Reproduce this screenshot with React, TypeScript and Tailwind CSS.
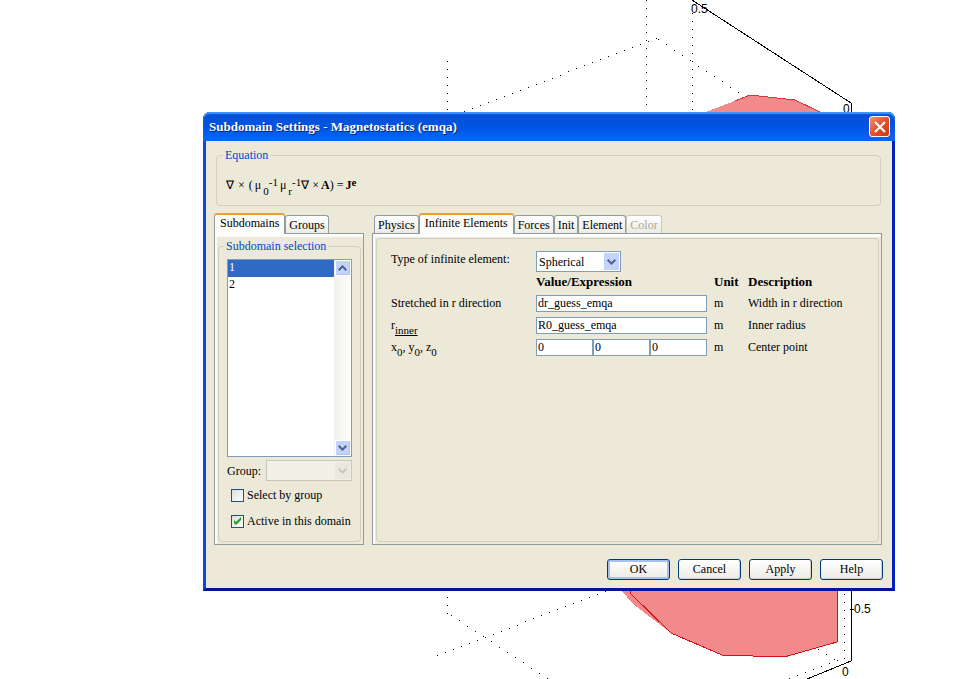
import React, { useState } from "react";
import clsx from "clsx";

type Point = [number, number];

interface TabsProps {
  items: { name: string; disabled?: boolean }[];
  active: string;
  onChange: (name: string) => void;
}

// 1px dots spaced 8px apart along the longer direction
const dots = ([x1, y1]: Point, [x2, y2]: Point): Point[] => {
  const steps = Math.floor(Math.max(Math.abs(x2 - x1), Math.abs(y2 - y1)) / 8);
  return Array.from({ length: steps + 1 }, (_, i) => [
    Math.round(x1 + ((x2 - x1) * i) / steps),
    Math.round(y1 + ((y2 - y1) * i) / steps),
  ]);
};

const gridDots: Point[] = [
  ...dots([447, 61], [447, 613]),
  ...dots([646, 0], [646, 112]),
  ...dots([692, 5], [692, 109]),
  ...dots([464, 111], [656, 38]),
  ...dots([658, 39], [738, 92]),
  ...dots([451, 615], [547, 678]),
  ...dots([437, 655], [605, 591]),
  ...dots([844, 594], [844, 658]),
  ...dots([789, 678], [837, 660]),
  ...dots([818, 649], [834, 659]),
];

const Plot: React.FC = () => (
  <svg
    className="absolute top-0 left-0 h-[679px] w-[973px]"
    viewBox="0 0 973 679"
    fontFamily="'Liberation Sans', Arial, sans-serif"
    fontSize="12"
    shapeRendering="crispEdges"
    aria-hidden="true"
  >
    <polygon points="706,112 750,95 795,100 820,112" fill="#f28a8c" />
    <polyline points="735,101 750,95 795,100 820,112" fill="none" stroke="#d8353c" />
    <polygon
      points="621,590 633,604 671,633 722,655 784,657 837,642 837,590"
      fill="#f28a8c"
    />
    <polyline
      points="630,590 631,594 671,633 722,655 784,657 837,642 837,590"
      fill="none"
      stroke="#d3121c"
    />
    {gridDots.map(([x, y], i) => (
      <rect key={i} x={x} y={y} width="1" height="1" fill="#000" />
    ))}
    <polyline points="692,0 851,103 851,661 807,679" fill="none" stroke="#000" />
    <path d="M850 609h4" stroke="#000" />
    <text x="691" y="13">0.5</text>
    <text x="843" y="113">0</text>
    <text x="854" y="613">0.5</text>
    <text x="842" y="676">0</text>
  </svg>
);

const Chevron: React.FC<{ up?: boolean }> = ({ up }) => (
  <svg viewBox="0 0 9 6" className="h-[6px] w-[9px]" fill="none" stroke="currentColor" strokeWidth="2">
    <path d={up ? "M0.7 5.2 4.5 1.4 8.3 5.2" : "M0.7 0.8 4.5 4.6 8.3 0.8"} />
  </svg>
);

const ScrollButton: React.FC<{ up?: boolean; onClick: () => void }> = ({ up, onClick }) => (
  <button
    type="button"
    aria-label={up ? "Scroll up" : "Scroll down"}
    onClick={onClick}
    className="flex h-4 w-4 items-center justify-center rounded-xs border border-white bg-[#c3d3fd] text-[#4d6185] shadow-[inset_-1px_-1px_0_#aec3f5]"
  >
    <Chevron up={up} />
  </button>
);

const Tabs: React.FC<TabsProps> = ({ items, active, onChange }) => (
  <div role="tablist" className="relative z-10 -mb-px flex h-[21px] items-end">
    {items.map(({ name, disabled }) => (
      <button
        key={name}
        type="button"
        role="tab"
        aria-selected={name === active}
        disabled={disabled}
        onClick={() => onChange(name)}
        className={clsx(
          "rounded-t-[3px] border border-b-0",
          name === active
            ? "h-[21px] border-x-[#919b9c] border-t-2 border-t-[#e9a033] bg-[#fcfcfa] px-[5px] pb-1"
            : "mb-px h-[18px] border-[#919b9c] bg-linear-to-b from-white to-[#ecebe5] px-[3px]",
          disabled && "border-[#c9c7ba] text-[#aca899]"
        )}
      >
        {name}
      </button>
    ))}
  </div>
);

const TextField: React.FC<{ id: string; label: string; initial: string }> = ({ id, label, initial }) => {
  const [value, setValue] = useState(initial);

  return (
    <input
      id={id}
      type="text"
      aria-label={label}
      value={value}
      onChange={(e) => setValue(e.target.value)}
      className="block h-[17px] w-full min-w-0 border border-[#7f9db9] bg-white pl-px outline-none"
    />
  );
};

const CheckBox: React.FC<{ label: string; initial?: boolean }> = ({ label, initial = false }) => {
  const [checked, setChecked] = useState(initial);

  return (
    <label className="flex h-4 items-center gap-[3px]">
      <span className="relative h-[13px] w-[13px]">
        <input
          type="checkbox"
          checked={checked}
          onChange={(e) => setChecked(e.target.checked)}
          className="block h-[13px] w-[13px] appearance-none border border-[#1c5180] bg-linear-to-br from-[#dcdcd7] to-white"
        />
        {checked && (
          <svg viewBox="0 0 13 13" className="pointer-events-none absolute inset-0" fill="#21a121">
            <path d="M3 5v3l2 2 5-5V2L5 7z" />
          </svg>
        )}
      </span>
      {label}
    </label>
  );
};

const DialogButton: React.FC<{ children: React.ReactNode; primary?: boolean }> = ({ children, primary }) => (
  <button
    type="button"
    className={clsx(
      "h-[21px] w-[63px] rounded-[3px] border border-[#003c74] bg-linear-to-b from-white to-[#ecebe5] pb-[2px]",
      primary ? "shadow-[inset_0_0_0_2px_#a3c0f0]" : "shadow-[inset_-1px_-1px_0_#d6d0c5]"
    )}
  >
    {children}
  </button>
);

const panelClass =
  "flex flex-1 flex-col border border-[#919b9c] bg-[#ece9d8] pr-[2px] pb-[2px] pl-[3px] pt-1 shadow-[inset_2px_3px_0_#fcfcfa]";

const subClass = "bottom-[-5px] text-[11px]";

const App: React.FC = () => {
  const [leftTab, setLeftTab] = useState("Subdomains");
  const [rightTab, setRightTab] = useState("Infinite Elements");
  const [subdomain, setSubdomain] = useState("1");
  const [elementType, setElementType] = useState("Spherical");

  return (
    <main className="relative min-h-screen overflow-hidden bg-white pt-28 pr-[78px] pl-[203px] font-['Liberation_Serif','Times_New_Roman',serif] text-[12px] leading-4 text-black">
      <Plot />

      <section
        role="dialog"
        aria-labelledby="dialog-title"
        className="relative rounded-t-[7px] border-x-[3px] border-b-[3px] border-r-[#0022c0] border-b-[#00159a] border-l-[#0a48e0] bg-[#ece9d8]"
      >
        <header className="-mx-[3px] flex h-[29px] items-center justify-between rounded-t-[7px] bg-linear-to-b from-[#0a4fd0] via-[#0054e3] to-[#0466fb] pr-[5px] pl-[6px] shadow-[inset_0_2px_1px_#3d95ff]">
          <h1 id="dialog-title" className="text-[13px] font-bold text-white [text-shadow:1px_1px_0_#0a246a]">
            Subdomain Settings - Magnetostatics (emqa)
          </h1>
          <button
            type="button"
            aria-label="Close"
            className="flex h-[21px] w-[21px] items-center justify-center rounded-[3px] border border-white bg-linear-to-br from-[#ee8f72] via-[#e0512b] to-[#c93a10]"
          >
            <svg viewBox="0 0 12 12" className="h-3 w-3" stroke="#fff" strokeWidth="2">
              <path d="M1 1l10 10M11 1L1 11" />
            </svg>
          </button>
        </header>

        <div className="pt-[6px] pr-[10px] pb-2 pl-2">
          <fieldset className="mr-px ml-[2px] h-[59px] rounded-[4px] border border-[#d0d0bf] pl-[9px]">
            <legend className="-ml-[3px] px-[2px] text-[#0046d5]">Equation</legend>
            <div className="flex h-11 items-center">
              <span>∇</span>
              <span className="ml-1">×</span>
              <span className="ml-1">(</span>
              <span className="ml-[2px]">μ</span>
              <sub className="top-[6px] ml-[2px] text-[11px]">0</sub>
              <sup className="-top-[3px] text-[11px]">-1</sup>
              <span className="ml-[2px]">μ</span>
              <sub className="top-[6px] ml-[2px] text-[11px]">r</sub>
              <sup className="-top-[3px] text-[11px]">-1</sup>
              <span>∇</span>
              <span className="ml-[3px]">×</span>
              <b className="ml-[2px]">A</b>
              <span>)</span>
              <span className="ml-[3px]">=</span>
              <b className="ml-[2px]">J</b>
              <sup className="-top-[3px] text-[11px] font-bold">e</sup>
            </div>
          </fieldset>

          <div className="mt-[7px] flex gap-2">
            <div className="flex w-[150px] shrink-0 flex-col">
              <Tabs
                items={[{ name: "Subdomains" }, { name: "Groups" }]}
                active={leftTab}
                onChange={setLeftTab}
              />
              <div className={panelClass}>
                <fieldset className="rounded-[4px] border border-[#d0d0bf] pt-[5px] pr-[8px] pb-3 pl-2">
                  <legend className="-ml-[3px] px-[2px] text-[#0046d5]">Subdomain selection</legend>
                  <div className="flex h-[198px] border border-[#7f9db9] bg-white">
                    <select
                      size={2}
                      aria-label="Subdomain selection"
                      value={subdomain}
                      onChange={(e) => setSubdomain(e.target.value)}
                      className="min-w-0 flex-1 appearance-none overflow-hidden bg-white outline-none [&>option]:h-[17px] [&>option]:px-px [&>option]:py-0 [&>option:checked]:bg-[linear-gradient(#316ac5,#316ac5)] [&>option:checked]:[-webkit-text-fill-color:#fff]"
                    >
                      <option value="1">1</option>
                      <option value="2">2</option>
                    </select>
                    <div className="flex w-[17px] flex-col items-center justify-between bg-linear-to-r from-[#f3f1ec] to-[#fefefb]">
                      <ScrollButton up onClick={() => setSubdomain("1")} />
                      <ScrollButton onClick={() => setSubdomain("2")} />
                    </div>
                  </div>

                  <div className="mt-[3px] flex items-center justify-between">
                    <label htmlFor="group">Group:</label>
                    <div className="relative h-[21px] w-[86px]">
                      <select
                        id="group"
                        disabled
                        className="h-full w-full appearance-none border border-[#c9c7ba] bg-[#f2f0e6]"
                      />
                      <span className="pointer-events-none absolute inset-y-[2px] right-[2px] flex w-[15px] items-center justify-center bg-[#eae8dd] text-[#c9c7ba]">
                        <Chevron />
                      </span>
                    </div>
                  </div>

                  <div className="mt-[6px] ml-1 flex flex-col gap-[10px]">
                    <CheckBox label="Select by group" />
                    <CheckBox label="Active in this domain" initial />
                  </div>
                </fieldset>
              </div>
            </div>

            <div className="flex min-w-0 flex-1 flex-col">
              <div className="pl-[2px]">
                <Tabs
                  items={[
                    { name: "Physics" },
                    { name: "Infinite Elements" },
                    { name: "Forces" },
                    { name: "Init" },
                    { name: "Element" },
                    { name: "Color", disabled: true },
                  ]}
                  active={rightTab}
                  onChange={setRightTab}
                />
              </div>
              <div className={panelClass}>
                <div className="flex-1 rounded-[4px] border border-[#d0d0bf] pt-3 pl-[14px]">
                  <div className="flex">
                    <label htmlFor="element-type" className="w-[145px]">
                      Type of infinite element:
                    </label>
                    <div className="relative h-[21px] w-[85px]">
                      <select
                        id="element-type"
                        value={elementType}
                        onChange={(e) => setElementType(e.target.value)}
                        className="h-full w-full appearance-none border border-[#7f9db9] bg-white pl-[2px] outline-none"
                      >
                        <option>Spherical</option>
                        <option>Cylindrical</option>
                        <option>Cartesian</option>
                      </select>
                      <span className="pointer-events-none absolute inset-y-[2px] right-[2px] flex w-[15px] items-center justify-center bg-[#c3d3fd] text-[#4d6185]">
                        <Chevron />
                      </span>
                    </div>
                  </div>

                  <table className="table-fixed border-collapse text-left [&_td]:p-0 [&_th]:p-0">
                    <colgroup>
                      <col className="w-[145px]" />
                      <col className="w-[178px]" />
                      <col className="w-[34px]" />
                      <col className="w-[120px]" />
                    </colgroup>
                    <thead>
                      <tr className="h-5 text-[13px]">
                        <td />
                        <th>Value/Expression</th>
                        <th>Unit</th>
                        <th>Description</th>
                      </tr>
                    </thead>
                    <tbody>
                      <tr className="h-[22px]">
                        <td>
                          <label htmlFor="dr">Stretched in r direction</label>
                        </td>
                        <td className="!pr-[7px]">
                          <TextField id="dr" label="Stretched in r direction" initial="dr_guess_emqa" />
                        </td>
                        <td>m</td>
                        <td>Width in r direction</td>
                      </tr>
                      <tr className="h-[22px]">
                        <td>
                          <label htmlFor="r-inner">
                            r<sub className={clsx(subClass, "underline")}>inner</sub>
                          </label>
                        </td>
                        <td className="!pr-[7px]">
                          <TextField id="r-inner" label="Inner radius" initial="R0_guess_emqa" />
                        </td>
                        <td>m</td>
                        <td>Inner radius</td>
                      </tr>
                      <tr className="h-[22px]">
                        <td>
                          <label htmlFor="x0">
                            x<sub className={subClass}>0</sub>, y<sub className={subClass}>0</sub>, z
                            <sub className={subClass}>0</sub>
                          </label>
                        </td>
                        <td className="!pr-[7px]">
                          <div className="flex">
                            <TextField id="x0" label="x0" initial="0" />
                            <TextField id="y0" label="y0" initial="0" />
                            <TextField id="z0" label="z0" initial="0" />
                          </div>
                        </td>
                        <td>m</td>
                        <td>Center point</td>
                      </tr>
                    </tbody>
                  </table>
                </div>
              </div>
            </div>
          </div>

          <footer className="-mr-px mt-[14px] flex justify-end gap-2">
            <DialogButton primary>OK</DialogButton>
            <DialogButton>Cancel</DialogButton>
            <DialogButton>Apply</DialogButton>
            <DialogButton>Help</DialogButton>
          </footer>
        </div>
      </section>
    </main>
  );
};

export default App;
